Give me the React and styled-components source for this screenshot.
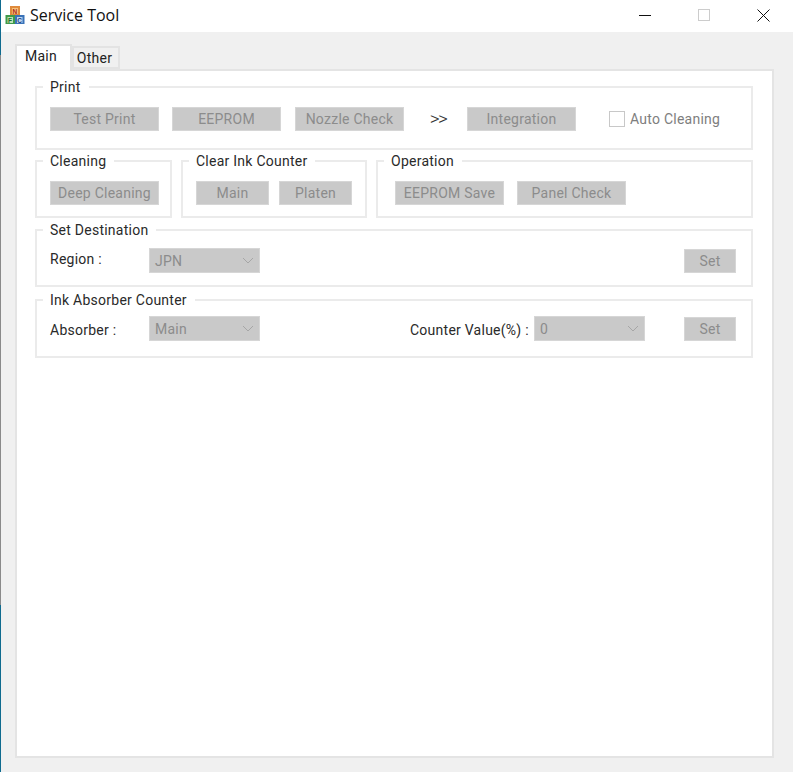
import React from "react";
import styled, { createGlobalStyle } from "styled-components";

const GlobalStyle = createGlobalStyle`
  html, body {
    margin: 0;
    padding: 0;
    background: #f0f0f0;
  }
  * {
    box-sizing: border-box;
  }
`;

const Window = styled.div`
  display: flex;
  width: 793px;
  height: 772px;
  overflow: hidden;
  background: #f0f0f0;
  font-family: Roboto, "Noto Sans", sans-serif;
  font-size: 14px;
  letter-spacing: 0.25px;
  color: #2a2a2a;
`;

const EdgeStrip = styled.div`
  display: flex;
  flex-direction: column;
  flex: 0 0 1px;
`;

const EdgeSegment = styled.div`
  height: ${(p) => p.$h}px;
  flex: ${(p) => (p.$h ? "none" : 1)};
  background: ${(p) => p.$color};
`;

const Main = styled.div`
  flex: 1;
  display: flex;
  flex-direction: column;
`;

const TitleBar = styled.div`
  display: flex;
  align-items: center;
  height: 32px;
  background: #fff;
  padding: 0 0 2px 4px;
`;

const AppTitle = styled.div`
  margin-left: 5px;
  font-family: "Open Sans", sans-serif;
  font-size: 16px;
  letter-spacing: 0;
  color: #111;
  flex: 1;
`;

const WinButton = styled.div`
  width: 59px;
  height: 30px;
  display: flex;
  align-items: center;
  justify-content: center;
`;

const Body = styled.div`
  flex: 1;
  display: flex;
  flex-direction: column;
  padding: 12px 19px 14px 14px;
`;

const TabRow = styled.div`
  display: flex;
  align-items: flex-end;
  height: 25px;
  position: relative;
  z-index: 1;
`;

const Tab = styled.div`
  display: flex;
  justify-content: center;
  align-items: center;
  width: ${(p) => p.$w}px;
  height: ${(p) => (p.$active ? 27 : 23)}px;
  margin-bottom: ${(p) => (p.$active ? -2 : 0)}px;
  padding-bottom: ${(p) => (p.$active ? 5 : 0)}px;
  padding-right: ${(p) => (p.$active ? 5 : 3)}px;
  background: ${(p) => (p.$active ? "#fff" : "#f0f0f0")};
  border: 2px solid #e3e3e3;
  border-bottom: ${(p) => (p.$active ? "none" : "2px solid #e3e3e3")};
  color: #222;
`;

const TabPanel = styled.div`
  flex: 1;
  display: flex;
  flex-direction: column;
  background: #fff;
  border: 2px solid #e4e4e4;
  padding: 7px 19px 0 18px;
`;

const Group = styled.fieldset`
  margin: ${(p) => p.$top || 0}px 0 0;
  padding: ${(p) => p.$padTop || 11}px 15px ${(p) => p.$padBottom || 11}px 13px;
  min-width: 0;
  flex: ${(p) => (p.$w ? `0 0 ${p.$w}px` : p.$grow ? 1 : "none")};
  border: 2px solid #ebebeb;
  display: flex;
`;

const Legend = styled.legend`
  margin-left: -7px;
  padding: 0 8px 0 7px;
  height: 18px;
  line-height: 18px;
  color: #2a2a2a;
`;

const GroupRow = styled.div`
  display: flex;
  margin-top: ${(p) => p.$top || 0}px;
  gap: ${(p) => p.$gap || 0}px;
`;

const Controls = styled.div`
  display: flex;
  align-items: center;
  width: 100%;
  gap: ${(p) => p.$gap || 0}px;
`;

const Button = styled.div`
  display: flex;
  align-items: center;
  justify-content: center;
  flex: none;
  width: ${(p) => p.$w || 109}px;
  height: 24px;
  margin-left: ${(p) => p.$left || 0}px;
  background: #c9c9c9;
  border: 1px solid #d6d6d6;
  color: #8c8c8c;
  white-space: nowrap;
`;

const Arrows = styled.div`
  width: 66px;
  padding-left: 2px;
  margin-right: -3px;
  text-align: center;
  font-size: 19px;
  font-weight: 300;
  letter-spacing: -1.5px;
  line-height: 24px;
  color: #333;
`;

const CheckWrap = styled.div`
  display: flex;
  align-items: center;
  margin-left: 33px;
  color: #7e7e7e;
`;

const CheckBox = styled.div`
  width: 16px;
  height: 16px;
  margin-right: 5px;
  border: 1px solid #c8c8c8;
`;

const Label = styled.div`
  width: ${(p) => p.$w}px;
  flex: none;
  margin-left: ${(p) => p.$left || 0}px;
  padding-bottom: ${(p) => p.$raise || 0}px;
  padding-top: ${(p) => p.$drop || 0}px;
  white-space: nowrap;
  color: #2a2a2a;
`;

const Select = styled.div`
  display: flex;
  align-items: center;
  justify-content: space-between;
  flex: none;
  width: 111px;
  height: 25px;
  padding: 0 5px;
  background: #c9c9c9;
  border: 1px solid #d6d6d6;
  color: #8c8c8c;
`;

const Spacer = styled.div`
  flex: 1;
`;

const Chevron = () => (
  <svg width="12" height="7" viewBox="0 0 12 7" fill="none" stroke="#a6a6a6" strokeWidth="1">
    <path d="M1 1l5 5 5-5" />
  </svg>
);

const AppIcon = () => (
  <svg width="20" height="20" viewBox="0 0 20 20">
    <rect x="5" y="1" width="10" height="9" fill="#e08a3c" />
    <rect x="7" y="3" width="6" height="6" fill="#f4c27a" />
    <text x="10" y="8.5" fontSize="6.5" fontWeight="700" textAnchor="middle" fill="#b02a1a" fontFamily="Liberation Sans, sans-serif">N</text>
    <rect x="0.5" y="10" width="9.5" height="9" fill="#3f9a4a" />
    <rect x="2.5" y="12" width="5.5" height="6" fill="#bfe3b5" />
    <text x="5.2" y="17.5" fontSize="6.5" fontWeight="700" textAnchor="middle" fill="#1c6a2c" fontFamily="Liberation Sans, sans-serif">F</text>
    <rect x="10" y="10" width="9.5" height="9" fill="#3a72b8" />
    <rect x="12" y="12" width="5.5" height="6" fill="#bcd6f0" />
    <text x="14.8" y="17.5" fontSize="6.5" fontWeight="700" textAnchor="middle" fill="#1c3f80" fontFamily="Liberation Sans, sans-serif">C</text>
  </svg>
);

export default function App() {
  return (
    <>
      <GlobalStyle />
      <Window>
        <EdgeStrip>
          <EdgeSegment $h={55} $color="#0f6b8f" />
          <EdgeSegment $h={550} $color="#8a8a8a" />
          <EdgeSegment $color="#0f6b8f" />
        </EdgeStrip>
        <Main>
          <TitleBar>
            <AppIcon />
            <AppTitle>Service Tool</AppTitle>
            <WinButton>
              <svg width="13" height="13" viewBox="0 0 13 13">
                <path d="M0 6.5h12" stroke="#111" strokeWidth="1" />
              </svg>
            </WinButton>
            <WinButton>
              <svg width="13" height="13" viewBox="0 0 13 13" fill="none">
                <rect x="0.5" y="0.5" width="11" height="11" stroke="#ccc" />
              </svg>
            </WinButton>
            <WinButton>
              <svg width="13" height="13" viewBox="0 0 13 13" fill="none">
                <path d="M0.5 0.5l12 12M12.5 0.5l-12 12" stroke="#111" strokeWidth="1" />
              </svg>
            </WinButton>
          </TitleBar>
          <Body>
            <TabRow>
              <Tab $active $w={57}>Main</Tab>
              <Tab $w={48}>Other</Tab>
            </TabRow>
            <TabPanel>
              <Group $padBottom={17}>
                <Legend>Print</Legend>
                <Controls>
                  <Button>Test Print</Button>
                  <Button $left={13}>EEPROM</Button>
                  <Button $left={14}>Nozzle Check</Button>
                  <Arrows>&gt;&gt;</Arrows>
                  <Button>Integration</Button>
                  <CheckWrap>
                    <CheckBox />
                    Auto Cleaning
                  </CheckWrap>
                </Controls>
              </Group>
              <GroupRow $top={2} $gap={9}>
                <Group $w={137}>
                  <Legend>Cleaning</Legend>
                  <Controls>
                    <Button>Deep Cleaning</Button>
                  </Controls>
                </Group>
                <Group $w={186}>
                  <Legend>Clear Ink Counter</Legend>
                  <Controls $gap={10}>
                    <Button $w={73}>Main</Button>
                    <Button $w={73}>Platen</Button>
                  </Controls>
                </Group>
                <Group $grow>
                  <Legend>Operation</Legend>
                  <Controls $gap={13}>
                    <Button $left={4}>EEPROM Save</Button>
                    <Button>Panel Check</Button>
                  </Controls>
                </Group>
              </GroupRow>
              <Group $top={3} $padTop={9} $padBottom={12}>
                <Legend>Set Destination</Legend>
                <Controls>
                  <Label $w={99} $raise={3}>Region :</Label>
                  <Select>
                    JPN
                    <Chevron />
                  </Select>
                  <Spacer />
                  <Button $w={52}>Set</Button>
                </Controls>
              </Group>
              <Group $top={4} $padTop={7} $padBottom={15}>
                <Legend>Ink Absorber Counter</Legend>
                <Controls>
                  <Label $w={99} $drop={3}>Absorber :</Label>
                  <Select>
                    Main
                    <Chevron />
                  </Select>
                  <Label $w={124} $left={150} $drop={3}>Counter Value(%) :</Label>
                  <Select>
                    0
                    <Chevron />
                  </Select>
                  <Spacer />
                  <Button $w={52}>Set</Button>
                </Controls>
              </Group>
            </TabPanel>
          </Body>
        </Main>
      </Window>
    </>
  );
}
